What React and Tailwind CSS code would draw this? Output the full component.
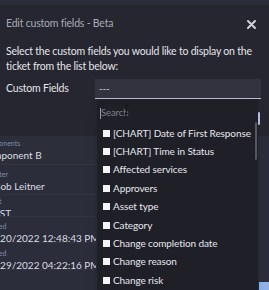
import { useState } from "react";

const fields = [
  "[CHART] Date of First Response",
  "[CHART] Time in Status",
  "Affected services",
  "Approvers",
  "Asset type",
  "Category",
  "Change completion date",
  "Change reason",
  "Change risk",
  "Change type",
];

const rows = [
  { label: "Components", value: "Component B", h: "h-[29px]", pt: "pt-[3px]", ls: "-ml-[19px]", vs: "-ml-[19px]", bg: "bg-[#2c2e3a]" },
  { label: "Reporter", value: "Bob Leitner", h: "h-[30px]", pt: "pt-[5px]", ls: "-ml-[19px]", vs: "-ml-[6px]" },
  { label: "Account", value: "EST", h: "h-[22px]", pt: "pt-[2px]", ls: "-ml-[24px]", vs: "-ml-[6px]" },
  { label: "Created", value: "06/20/2022 12:48:43 PM", h: "h-[26px]", pt: "pt-[5px]", ls: "-ml-[18px]", vs: "-ml-[16px]" },
  { label: "Updated", value: "06/29/2022 04:22:16 PM", h: "h-[27px]", pt: "pt-[6px]", ls: "-ml-[20px]", vs: "-ml-[16px]" },
  { label: "Tags", value: "Alex Miller", h: "h-[30px]", pt: "pt-[8px]", ls: "-ml-[30px]", vs: "-ml-[6px]" },
];

export default function App() {
  const [checked, setChecked] = useState({});

  return (
    <div className="relative w-[269px] h-[290px] overflow-hidden bg-[#2b2d3a] font-['Lato',sans-serif]">
      <div className="h-[5px]" />

      {/* modal */}
      <div className="relative z-10 h-[131px] bg-[#25262f] pl-[6px] pr-[8px] pt-[11px] tracking-[-0.2px]">
        <div className="flex items-center justify-between h-[16px]">
          <span className="text-[10.5px] text-[#a8a9b5]">Edit custom fields - Beta</span>
          <svg width="9" height="9" viewBox="0 0 9 9" className="mr-[5px]">
            <path d="M1 1L8 8M8 1L1 8" stroke="#cfd0d8" strokeWidth="2" strokeLinecap="round" />
          </svg>
        </div>
        <p className="mt-[12px] text-[10.5px] leading-[15px] text-[#e4e4ea]">
          Select the custom fields you would like to display on the ticket from the list below:
        </p>
        <div className="mt-[5px] flex items-center">
          <span className="w-[89px] text-[10.5px] text-[#e4e4ea]">Custom Fields</span>
          <div className="relative">
            <div className="w-[166px] h-[20px] bg-[#32333e] border-b border-[#b9bbcf] pl-[4px] text-[10px] leading-[19px] text-[#cfd0d8]">
              ---
            </div>

            {/* dropdown */}
            <div className="absolute left-[2px] top-[20px] w-[161px] h-[200px] bg-[#1e1f27] shadow-lg tracking-[-0.1px]">
              <div className="relative h-[25px] pt-[8px] pl-[3px] flex items-start">
                <span className="w-px h-[11px] mt-[1px] bg-[#9a9aa6]" />
                <span className="text-[9.5px] leading-[12px] text-[#7e7f8a]">Search</span>
                <svg width="5" height="9" viewBox="0 0 5 9" className="absolute left-[27px] top-[6px]">
                  <path d="M0.5 0.5H4.5M2.5 0.5V8.5M0.5 8.5H4.5" stroke="#15151a" strokeWidth="1" />
                </svg>
                <span className="absolute right-[-2px] top-[13px] w-[2px] h-[13px] bg-[#b4bcdc] rounded" />
              </div>
              <div className="relative">
                <span className="absolute right-[1px] top-[-2px] w-[2px] h-[38px] bg-[#55565f] rounded" />
                {fields.map((f) => (
                  <label key={f} className="flex items-center h-[18.4px] pl-[6px] cursor-pointer">
                    <input
                      type="checkbox"
                      className="sr-only"
                      checked={!!checked[f]}
                      onChange={() => setChecked((c) => ({ ...c, [f]: !c[f] }))}
                    />
                    <span className="shrink-0 w-[7px] h-[7px] bg-[#f4f4f6] mr-[3px]" />
                    <span className="text-[10px] text-[#e6e6ec] whitespace-nowrap">{f}</span>
                  </label>
                ))}
              </div>
            </div>
          </div>
        </div>
      </div>

      {/* ticket details behind the modal */}
      <div className="w-[96px]">
        {rows.map((r) => (
          <div key={r.label} className={`${r.h} ${r.pt} ${r.bg || ""} border-b border-[#34363f] overflow-hidden whitespace-nowrap`}>
            <div className={`${r.ls} text-[7px] leading-[8px] text-[#7d8cb0]`}>{r.label}</div>
            <div className={`${r.vs} mt-[2px] text-[10px] leading-[13px] text-[#dcdce3]`}>{r.value}</div>
          </div>
        ))}
      </div>
      <div className="absolute right-0 bottom-0 w-[10px] h-[8px] bg-[#8fb4e8]" />
    </div>
  );
}
